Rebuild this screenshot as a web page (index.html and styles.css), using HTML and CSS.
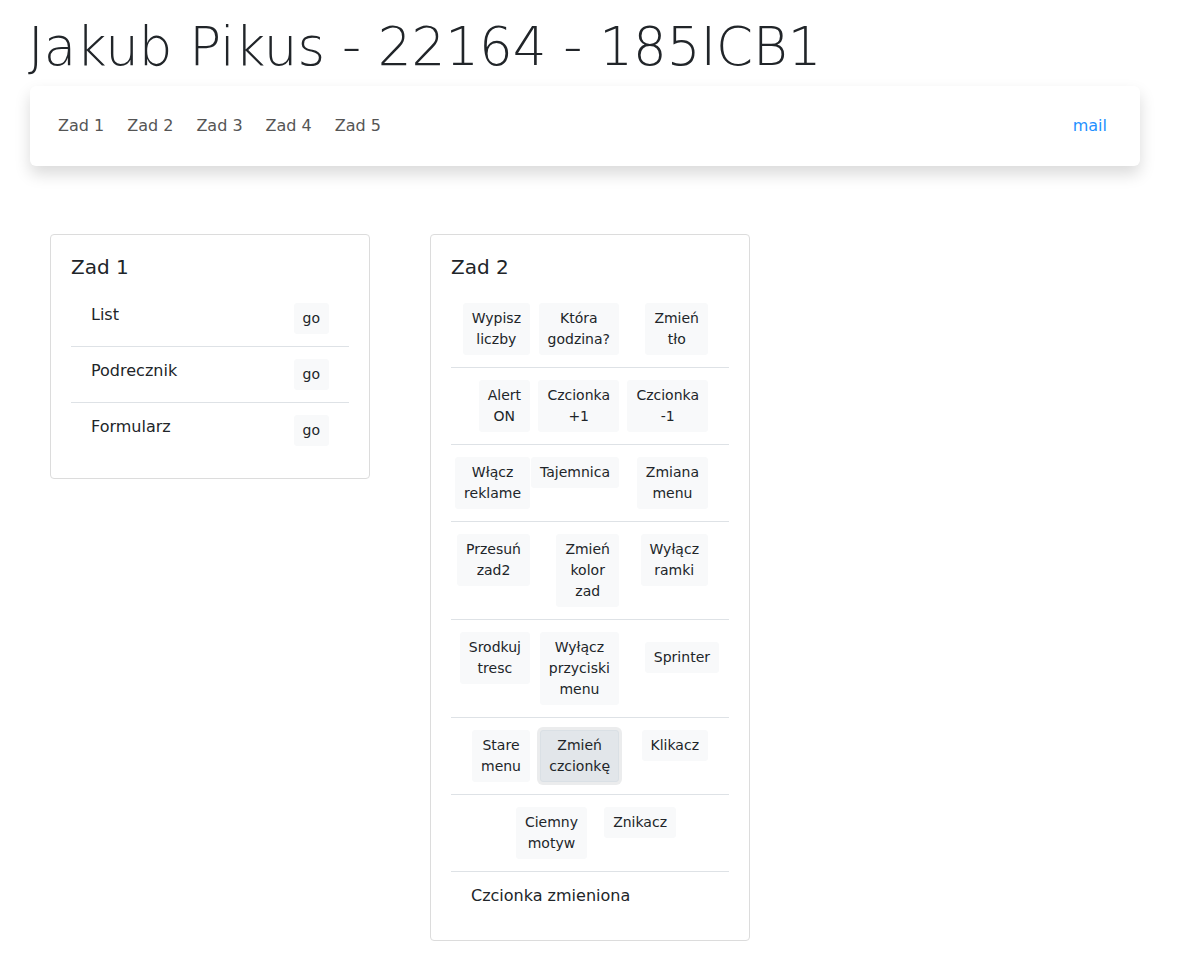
FILE: index.html
```html
<!DOCTYPE html>
<html lang="pl">
<head>
<meta charset="utf-8">
<title>Jakub Pikus</title>
<link rel="stylesheet" href="styles.css">
</head>
<body>
<div class="page">
  <h1 class="title">Jakub Pikus - 22164 - 185ICB1</h1>
  <nav class="navbar">
    <ul class="nav-links">
      <li><a href="#">Zad 1</a></li>
      <li><a href="#">Zad 2</a></li>
      <li><a href="#">Zad 3</a></li>
      <li><a href="#">Zad 4</a></li>
      <li><a href="#">Zad 5</a></li>
    </ul>
    <a class="mail" href="#">mail</a>
  </nav>

  <div class="cards">
    <section class="card">
      <h5 class="card-title">Zad 1</h5>
      <ul class="list">
        <li class="item item-split"><span>List</span><button class="btn">go</button></li>
        <li class="item item-split"><span>Podrecznik</span><button class="btn">go</button></li>
        <li class="item item-split"><span>Formularz</span><button class="btn">go</button></li>
      </ul>
    </section>

    <section class="card">
      <h5 class="card-title">Zad 2</h5>
      <ul class="list">
        <li class="item btn-row">
          <button class="btn">Wypisz liczby</button>
          <button class="btn">Która godzina?</button>
          <button class="btn">Zmień tło</button>
        </li>
        <li class="item btn-row">
          <button class="btn">Alert ON</button>
          <button class="btn">Czcionka +1</button>
          <button class="btn">Czcionka -1</button>
        </li>
        <li class="item btn-row">
          <button class="btn">Włącz reklame</button>
          <button class="btn">Tajemnica</button>
          <button class="btn">Zmiana menu</button>
        </li>
        <li class="item btn-row">
          <button class="btn">Przesuń zad2</button>
          <button class="btn">Zmień kolor zad</button>
          <button class="btn">Wyłącz ramki</button>
        </li>
        <li class="item btn-row">
          <button class="btn">Srodkuj tresc</button>
          <button class="btn">Wyłącz przyciski menu</button>
          <button class="btn btn-moved">Sprinter</button>
        </li>
        <li class="item btn-row">
          <button class="btn">Stare menu</button>
          <button class="btn btn-focus">Zmień czcionkę</button>
          <button class="btn">Klikacz</button>
        </li>
        <li class="item btn-row btn-row-two">
          <button class="btn">Ciemny motyw</button>
          <button class="btn">Znikacz</button>
        </li>
        <li class="item">Czcionka zmieniona</li>
      </ul>
    </section>
  </div>
</div>
</body>
</html>
```

FILE: styles.css
```css
* {
  box-sizing: border-box;
}

html, body {
  margin: 0;
  padding: 0;
  background: #ffffff;
}

body {
  font-family: "DejaVu Sans", "Liberation Sans", sans-serif;
  color: #212529;
  font-size: 16px;
  line-height: 24px;
}

.page {
  padding: 0 0 20px 30px;
}

.title {
  margin: 15px 0 0 -2px;
  font-size: 53px;
  line-height: 64px;
  font-weight: 200;
  color: #212529;
}

.navbar {
  margin-top: 7px;
  width: 1110px;
  height: 80px;
  background: #ffffff;
  border-radius: 6px;
  box-shadow: 0 8px 16px rgba(0, 0, 0, 0.15);
  display: flex;
  align-items: center;
  justify-content: space-between;
  padding: 0 33px 0 28px;
}

.nav-links {
  list-style: none;
  margin: 0;
  padding: 0;
  display: flex;
  gap: 23px;
}

.nav-links a {
  color: #555555;
  text-decoration: none;
  font-size: 16px;
}

.mail {
  color: #1e90ff;
  text-decoration: none;
  font-size: 16px;
}

.cards {
  display: flex;
  align-items: flex-start;
  gap: 60px;
  margin-top: 68px;
  padding-left: 20px;
}

.card {
  width: 320px;
  border: 1px solid #dcdcdc;
  border-radius: 4px;
  padding: 20px;
  background: #fff;
}

.card-title {
  margin: 0 0 12px;
  font-size: 20px;
  line-height: 24px;
  font-weight: 500;
}

.list {
  list-style: none;
  margin: 0;
  padding: 0;
}

.item {
  padding: 12px 20px;
  border-bottom: 1px solid #dee2e6;
}

.item:last-child {
  border-bottom: none;
}

.item-split {
  display: flex;
  justify-content: space-between;
  align-items: flex-start;
}

.btn {
  font-family: inherit;
  font-size: 14px;
  line-height: 21px;
  color: #212529;
  background: #f8f9fa;
  border: 1px solid #f8f9fa;
  border-radius: 3px;
  padding: 4px 8px;
  text-align: center;
  cursor: pointer;
}

.btn-row {
  display: grid;
  grid-template-columns: 59px 89px 89px;
  justify-items: end;
  align-items: start;
}

.btn-row .btn {
  width: min-content;
}

.btn-row-two {
  grid-template-columns: 116px 89px;
}

.btn-moved {
  margin: 10px -11px 0 0;
}

.btn-focus {
  background: #e2e6ea;
  border-color: #dae0e5;
  box-shadow: 0 0 0 3px rgba(216, 217, 219, 0.5);
}
```
